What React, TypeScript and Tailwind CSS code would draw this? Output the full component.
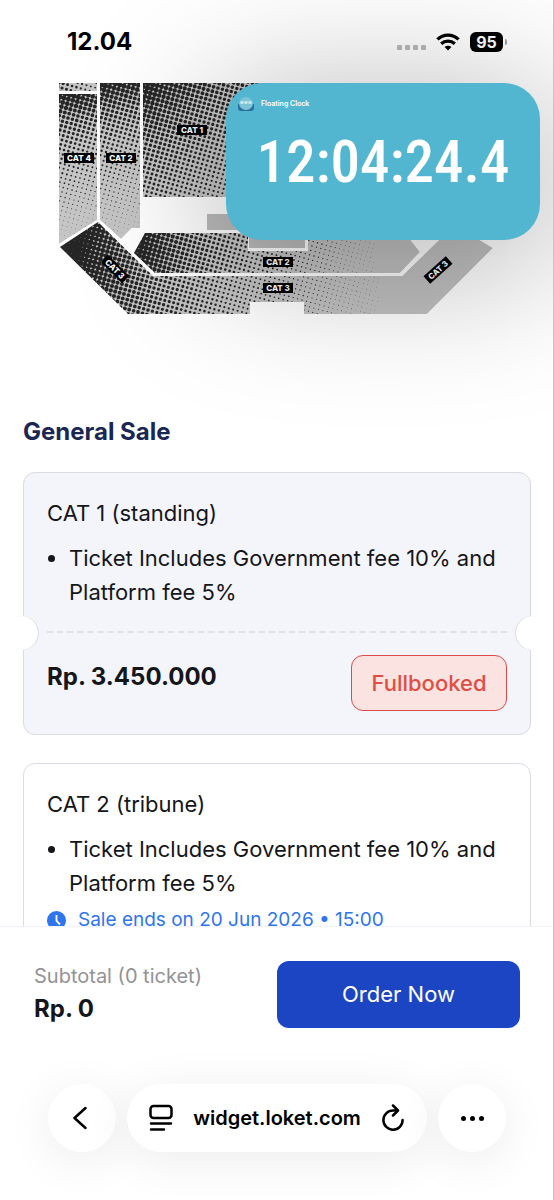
import React from 'react';

interface Section {
  id: string;
  points: [number, number][];
  // where the halftone starts (largest dots) and where it fades out
  from: [number, number];
  to: [number, number];
  start: number;
  end: number;
}

interface Ticket {
  name: string;
  includes: string;
  price?: string;
  soldOut: boolean;
  saleEnds?: string;
}

const sections: Section[] = [
  { id: 'cat4-top', points: [[59, 83], [97, 83], [97, 91], [59, 91]], from: [59, 83], to: [110, 110], start: 2, end: 0.5 },
  { id: 'cat4', points: [[59, 94], [97, 94], [97, 220], [59, 244]], from: [59, 94], to: [90, 225], start: 2.9, end: 0.3 },
  { id: 'cat2-left', points: [[100, 83], [140, 83], [140, 228], [132, 228], [121, 239], [100, 220]], from: [100, 83], to: [132, 225], start: 2.9, end: 0.3 },
  { id: 'cat1', points: [[143, 83], [300, 83], [300, 197], [143, 197]], from: [143, 83], to: [235, 220], start: 2.9, end: 0.8 },
  {
    id: 'cat2-bottom',
    points: [[145, 233], [248, 233], [248, 251], [308, 251], [308, 233], [405, 233], [420, 252], [400, 273], [155, 273], [134, 253]],
    from: [140, 235], to: [380, 275], start: 2.9, end: 0.2,
  },
  {
    id: 'cat3',
    points: [[98, 222], [153, 276], [402, 276], [440, 239], [478, 239], [493, 248], [427, 314], [304, 314], [304, 302], [250, 302], [250, 314], [128, 314], [60, 247]],
    from: [80, 240], to: [390, 290], start: 3, end: 0.2,
  },
];

const labels = [
  { text: 'CAT 1', x: 192, y: 130, angle: 0 },
  { text: 'CAT 4', x: 79, y: 158, angle: 0 },
  { text: 'CAT 2', x: 121, y: 158, angle: 0 },
  { text: 'CAT 2', x: 278, y: 262, angle: 0 },
  { text: 'CAT 3', x: 278, y: 288, angle: 0 },
  { text: 'CAT 3', x: 115, y: 269, angle: 45 },
  { text: 'CAT 3', x: 438, y: 270, angle: -42 },
];

const tickets: Ticket[] = [
  {
    name: 'CAT 1 (standing)',
    includes: 'Ticket Includes Government fee 10% and Platform fee 5%',
    price: 'Rp. 3.450.000',
    soldOut: true,
  },
  {
    name: 'CAT 2 (tribune)',
    includes: 'Ticket Includes Government fee 10% and Platform fee 5%',
    soldOut: false,
    saleEnds: 'Sale ends on 20 Jun 2026 • 15:00',
  },
];

// Builds one path holding every halftone dot of a section
const halftone = ({ points, from, to, start, end }: Section) => {
  const xs = points.map((p) => p[0]);
  const ys = points.map((p) => p[1]);
  const dx = to[0] - from[0];
  const dy = to[1] - from[1];
  const length = dx * dx + dy * dy;
  const ux = 4.4;
  const uy = 1.2;
  let d = '';
  for (let i = -20; i < 160; i++) {
    for (let j = -120; j < 120; j++) {
      const x = 50 + i * ux - j * uy;
      const y = 80 + i * uy + j * ux;
      if (x < Math.min(...xs) - 3 || x > Math.max(...xs) + 3) continue;
      if (y < Math.min(...ys) - 3 || y > Math.max(...ys) + 3) continue;
      const t = Math.max(0, ((x - from[0]) * dx + (y - from[1]) * dy) / length);
      const r = start + (end - start) * Math.pow(t, 0.55);
      if (r < 0.25) continue;
      d += `M${(x - r).toFixed(1)} ${y.toFixed(1)}a${r.toFixed(2)} ${r.toFixed(2)} 0 1 0 ${(2 * r).toFixed(2)} 0a${r.toFixed(2)} ${r.toFixed(2)} 0 1 0 ${(-2 * r).toFixed(2)} 0`;
    }
  }
  return d;
};

const SeatMap: React.FC = () => (
  <svg viewBox="59 83 436 231" className="block h-auto w-full" role="img" aria-label="Seating plan">
    <defs>
      <linearGradient id="floor" gradientUnits="userSpaceOnUse" x1="59" y1="83" x2="495" y2="314">
        <stop offset="0" stopColor="#c6c6c6" />
        <stop offset="1" stopColor="#c0c0c0" />
      </linearGradient>
      {sections.map((section) => (
        <clipPath key={section.id} id={section.id}>
          <polygon points={section.points.join(' ')} />
        </clipPath>
      ))}
    </defs>
    <path d="M59 83H495V247L427 314H304V302H250V314H128L59 247Z" fill="#fff" />
    <rect x="207" y="214" width="60" height="16" fill="#bcbcbc" />
    <rect x="249" y="230" width="56" height="18" fill="#bcbcbc" />
    {sections.map((section) => (
      <g key={section.id} clipPath={`url(#${section.id})`}>
        <polygon points={section.points.join(' ')} fill="url(#floor)" />
        <path d={halftone(section)} fill="#262626" />
      </g>
    ))}
    {labels.map(({ text, x, y, angle }) => (
      <g key={`${x}-${y}`} transform={`translate(${x} ${y}) rotate(${angle})`}>
        <rect x="-15" y="-5" width="30" height="10" fill="#000" />
        <text y="3" textAnchor="middle" fill="#fff" className="font-['Inter'] text-[8px] font-extrabold">
          {text}
        </text>
      </g>
    ))}
  </svg>
);

const StatusBar: React.FC = () => (
  <header className="flex h-[83px] items-center justify-between pr-[47px] pl-[67px]">
    <span className="text-2xl font-bold text-black">12.04</span>
    <div className="flex items-center gap-[10px]">
      <div className="flex gap-[3px] pt-3">
        {[0, 1, 2, 3].map((dot) => (
          <span key={dot} className="h-[5px] w-[5px] rounded-[1px] bg-[#b9b9b9]" />
        ))}
      </div>
      <svg width="24" height="18" viewBox="0 0 24 18" fill="none" stroke="#000" strokeWidth="3.200" aria-hidden="true">
        <path d="M1.400 6.400C7.400 .6 16.600 .6 22.600 6.400" />
        <path d="M5.200 10.800C9 7.300 15 7.300 18.800 10.800" />
        <path d="M8.600 14C10.400 12.200 13.600 12.200 15.400 14L12 17.600Z" fill="#000" stroke="none" />
      </svg>
      <div className="flex items-center gap-[2px]">
        <span className="flex h-5 w-[33px] items-center justify-center rounded-md bg-black text-base font-bold text-white">95</span>
        <span className="h-[6px] w-[2px] rounded-r-full bg-[#a0a0a0]" />
      </div>
    </div>
  </header>
);

const FloatingClock: React.FC = () => (
  <aside className="absolute top-[83px] right-[14px] h-[157px] w-[314px] rounded-[36px] bg-[#52b6d0] shadow-[0_20px_140px_20px_rgba(0,0,0,0.26)]">
    <div className="flex items-center gap-[7px] px-3 pt-[13px]">
      <svg width="16" height="16" viewBox="0 0 16 16" aria-hidden="true">
        <path d="M0 8h16v4a3 3 0 0 1-3 3H3a3 3 0 0 1-3-3Z" fill="#2b6f9c" />
        <ellipse cx="8" cy="7.500" rx="7" ry="6.500" fill="#7dc3d6" />
        <path d="M2.500 6.500h11" stroke="#d5edf3" strokeWidth="2.500" strokeDasharray="3 1" />
      </svg>
      <span className="text-[7px] font-semibold text-white">Floating Clock</span>
    </div>
    <time className="block pt-1 text-center font-['Roboto_Condensed','Roboto',sans-serif] text-[59px] leading-[92px] font-medium text-white">
      12:04:24.4
    </time>
  </aside>
);

const TicketCard: React.FC<{ ticket: Ticket }> = ({ ticket }) => (
  <li
    className={`relative rounded-xl border border-[#d9dbe5] px-[23px] pt-6 pb-[23px] ${ticket.soldOut ? 'bg-[#f4f5fa]' : 'bg-white'}`}
  >
    <h3 className="text-[22px] leading-8 text-[#14161a]">{ticket.name}</h3>
    <ul className="mt-3 list-disc pl-[22px] text-[22px] leading-[34px] text-[#14161a]">
      <li>{ticket.includes}</li>
    </ul>
    {ticket.saleEnds && (
      <p className="mt-2 flex items-center gap-3 text-[19px] leading-6 text-[#2f75ec]">
        <svg width="19" height="19" viewBox="0 0 19 19" aria-hidden="true">
          <circle cx="9.500" cy="9.500" r="9.500" fill="currentColor" />
          <path d="M9.500 4v6l3.500 3.500" fill="none" stroke="#fff" strokeWidth="1.800" />
        </svg>
        {ticket.saleEnds}
      </p>
    )}
    <div className="relative mt-[22px] border-t-2 border-dashed border-[#dfe1e7]">
      <span className="absolute -top-[17px] -left-[42px] h-[34px] w-[34px] rounded-full bg-white shadow-[inset_-1px_0_0_#d9dbe5]" />
      <span className="absolute -top-[17px] -right-[42px] h-[34px] w-[34px] rounded-full bg-white shadow-[inset_1px_0_0_#d9dbe5]" />
    </div>
    {ticket.price && (
      <div className="mt-[22px] flex items-start justify-between">
        <p className="pt-[6px] text-2xl font-bold text-[#14161a]">{ticket.price}</p>
        {ticket.soldOut && (
          <button
            disabled
            className="h-14 w-[156px] rounded-xl border border-[#dc4a45] bg-[#fbe3e2] text-[22px] font-medium text-[#e04e43]"
          >
            Fullbooked
          </button>
        )}
      </div>
    )}
  </li>
);

const OrderBar: React.FC = () => (
  <section className="flex items-center justify-between border-t border-[#f1f2fa] px-[34px] pt-[34px]">
    <div>
      <p className="text-xl leading-7 text-[#929395]">Subtotal (0 ticket)</p>
      <p className="text-2xl leading-[38px] font-bold text-[#14161a]">Rp. 0</p>
    </div>
    <button className="h-[67px] w-[243px] rounded-xl bg-[#1c45c4] text-[22px] text-white">Order Now</button>
  </section>
);

const BrowserBar: React.FC = () => (
  <nav className="flex gap-[11px] px-12 pt-14 pb-12">
    <button
      aria-label="Back"
      className="flex h-[68px] w-[68px] shrink-0 items-center justify-center rounded-full bg-white pr-1 shadow-[0_8px_48px_rgba(0,0,0,0.08)]"
    >
      <svg width="14" height="24" viewBox="0 0 14 24" fill="none" stroke="#000" strokeWidth="2.500" strokeLinecap="round" strokeLinejoin="round" aria-hidden="true">
        <path d="M12.500 2L1.500 12l11 10" />
      </svg>
    </button>
    <div className="flex h-[68px] flex-1 items-center justify-between rounded-full bg-white px-[22px] shadow-[0_8px_48px_rgba(0,0,0,0.08)]">
      <button aria-label="Page menu">
        <svg width="24" height="28" viewBox="0 0 24 28" fill="none" stroke="#000" strokeWidth="2.500" strokeLinecap="round" aria-hidden="true">
          <rect x="1.500" y="2" width="21" height="12" rx="3" />
          <path d="M2 19.500h20M2 25.500h13" strokeWidth="2.400" />
        </svg>
      </button>
      <a href="https://widget.loket.com" className="text-xl font-semibold text-black">
        widget.loket.com
      </a>
      <button aria-label="Reload">
        <svg width="24" height="28" viewBox="0 0 24 28" fill="none" stroke="#000" strokeWidth="2.500" strokeLinecap="round" strokeLinejoin="round" aria-hidden="true">
          <path d="M15.500 6.500H12A9.600 9.600 0 1 0 21.600 16" />
          <path d="M12 1.500l5 5-5 5" />
        </svg>
      </button>
    </div>
    <button
      aria-label="More"
      className="flex h-[68px] w-[68px] shrink-0 items-center justify-center gap-1 rounded-full bg-white shadow-[0_8px_48px_rgba(0,0,0,0.08)]"
    >
      <span className="h-[5px] w-[5px] rounded-full bg-black" />
      <span className="h-[5px] w-[5px] rounded-full bg-black" />
      <span className="h-[5px] w-[5px] rounded-full bg-black" />
    </button>
  </nav>
);

const App: React.FC = () => {
  return (
    <div className="relative flex h-screen flex-col overflow-hidden bg-white font-['Inter','Liberation_Sans',sans-serif]">
      <StatusBar />
      <FloatingClock />
      <main className="min-h-0 flex-1 overflow-hidden">
        <div className="px-[59px]">
          <SeatMap />
        </div>
        <div className="relative px-[23px] pt-[102px]">
          <h2 className="text-2xl leading-8 font-bold text-[#1a2753]">General Sale</h2>
          <ul className="mt-6 flex flex-col gap-7">
            {tickets.map((ticket) => (
              <TicketCard key={ticket.name} ticket={ticket} />
            ))}
          </ul>
        </div>
      </main>
      <footer className="relative bg-white">
        <OrderBar />
        <BrowserBar />
      </footer>
      <div className="absolute inset-y-0 right-0 w-px bg-[#c4c4c4]" />
    </div>
  );
};

export default App;
